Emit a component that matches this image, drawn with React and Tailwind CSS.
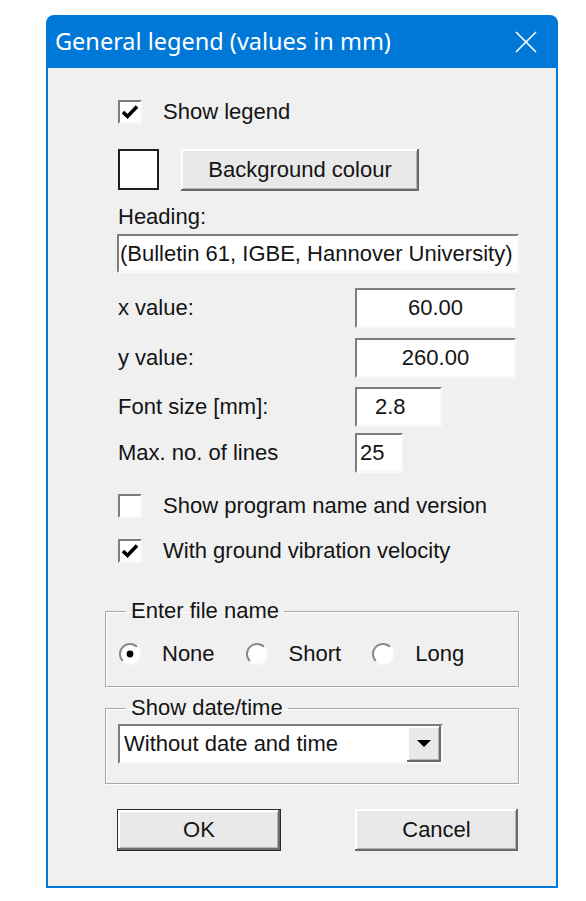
import React from 'react';

const sunken = 'border-2 border-t-[#7d7d7d] border-l-[#7d7d7d] border-b-[#f8f8f8] border-r-[#f8f8f8] bg-white';
const raised =
  'bg-[#e9e9e9] shadow-[inset_-2px_-2px_0_#6a6a6a,inset_2px_2px_0_#ffffff,inset_-3px_-3px_0_#b4b4b4]';

const CheckBox = ({ checked, label }) => (
  <div className="flex h-[24px] items-center ml-[13px]">
    <div className={`w-[24px] h-[24px] flex items-center justify-center ${sunken}`}>
      {checked && (
        <svg width="18" height="16" viewBox="0 0 18 16">
          <path d="M2 8 L6.5 12.5 L16 2.5" fill="none" stroke="#000" strokeWidth="3.6" />
        </svg>
      )}
    </div>
    <span className="ml-[21px]">{label}</span>
  </div>
);

const Radio = ({ checked, label, className }) => (
  <div className={`flex items-center ${className || ''}`}>
    <svg width="24" height="24" viewBox="0 0 24 24">
      <circle cx="12" cy="12" r="10" fill="#fff" />
      <path d="M4.9 19.1 A10 10 0 0 1 19.1 4.9" fill="none" stroke="#8a8a8a" strokeWidth="2" />
      <path d="M19.1 4.9 A10 10 0 0 1 4.9 19.1" fill="none" stroke="#fbfbfb" strokeWidth="2" />
      {checked && <circle cx="12" cy="12" r="3.4" fill="#000" />}
    </svg>
    <span className="ml-[20px]">{label}</span>
  </div>
);

const Field = ({ label, value, width, align, mt }) => (
  <div className={`flex items-center ml-[13px] ${mt}`}>
    <span className="w-[237px]">{label}</span>
    <div className={`h-[40px] flex items-center ${sunken} ${width} ${align}`}>{value}</div>
  </div>
);

export default function App() {
  return (
    <div
      className="min-h-[901px] bg-white pl-[46px] pt-[15px] text-[22px] text-[#141414]"
      style={{ fontFamily: '"Liberation Sans", Arial, sans-serif' }}
    >
      <div className="w-[512px]">
        {/* title bar */}
        <div className="h-[53px] rounded-t-[8px] bg-[#0078d7] flex items-center justify-between pl-[9px] pr-[21px]">
          <span className="text-white text-[23.5px] leading-none" style={{ fontFamily: '"Noto Sans", "Open Sans", sans-serif' }}>
            General legend (values in mm)
          </span>
          <svg width="22" height="22" viewBox="0 0 22 22">
            <path d="M1 1 L21 21 M21 1 L1 21" stroke="#fff" strokeWidth="1.6" />
          </svg>
        </div>

        {/* body */}
        <div className="bg-[#f0f0f0] border-x-2 border-b-2 border-[#0078d7] pl-[57px] pb-[35px] leading-[26px]">
          <div className="pt-[32px]">
            <CheckBox checked label="Show legend" />
          </div>

          <div className="flex items-center ml-[13px] mt-[24px] h-[43px]">
            <div className="w-[41px] h-[41px] bg-white border-2 border-[#1e1e1e]" />
            <button className={`ml-[22px] w-[238px] h-[42px] ${raised}`}>Background colour</button>
          </div>

          <div className="ml-[13px] mt-[13px]">Heading:</div>
          <div className={`ml-[12px] mt-[4px] w-[402px] h-[39px] flex items-center overflow-hidden whitespace-nowrap pl-[1px] ${sunken}`}>
            (Bulletin 61, IGBE, Hannover University)
          </div>

          <Field label="x value:" value="60.00" width="w-[161px]" align="justify-center" mt="mt-[15px]" />
          <Field label="y value:" value="260.00" width="w-[161px]" align="justify-center" mt="mt-[10px]" />
          <Field label="Font size [mm]:" value="2.8" width="w-[87px]" align="pl-[18px]" mt="mt-[9px]" />
          <Field label="Max. no. of lines" value="25" width="w-[48px]" align="pl-[3px]" mt="mt-[6px]" />

          <div className="mt-[21px]">
            <CheckBox label="Show program name and version" />
          </div>
          <div className="mt-[21px]">
            <CheckBox checked label="With ground vibration velocity" />
          </div>

          <fieldset className="mt-[35px] w-[414px] h-[89px] border border-[#a8a8a8] shadow-[1px_1px_0_#ffffff,inset_1px_1px_0_#ffffff] pl-[12px]">
            <legend className="ml-[8px] px-[5px]">Enter file name</legend>
            <div className="flex items-center mt-[17px]">
              <Radio checked label="None" />
              <Radio label="Short" className="ml-[30px]" />
              <Radio label="Long" className="ml-[30px]" />
            </div>
          </fieldset>

          <fieldset className="mt-[8px] w-[414px] h-[89px] border border-[#a8a8a8] shadow-[1px_1px_0_#ffffff,inset_1px_1px_0_#ffffff] pl-[12px]">
            <legend className="ml-[8px] px-[5px]">Show date/time</legend>
            <div className={`mt-[3px] w-[325px] h-[40px] flex items-center justify-between ${sunken}`}>
              <span className="pl-[4px]">Without date and time</span>
              <div className={`w-[34px] h-[36px] flex items-center justify-center ${raised}`}>
                <svg width="14" height="8" viewBox="0 0 14 8">
                  <path d="M0 0 L14 0 L7 7 Z" fill="#000" />
                </svg>
              </div>
            </div>
          </fieldset>

          <div className="flex mt-[25px] ml-[12px]">
            <button className={`w-[164px] h-[42px] border border-[#2a2a2a] ${raised}`}>OK</button>
            <button className={`ml-[74px] w-[163px] h-[42px] ${raised}`}>Cancel</button>
          </div>
        </div>
      </div>
    </div>
  );
}
